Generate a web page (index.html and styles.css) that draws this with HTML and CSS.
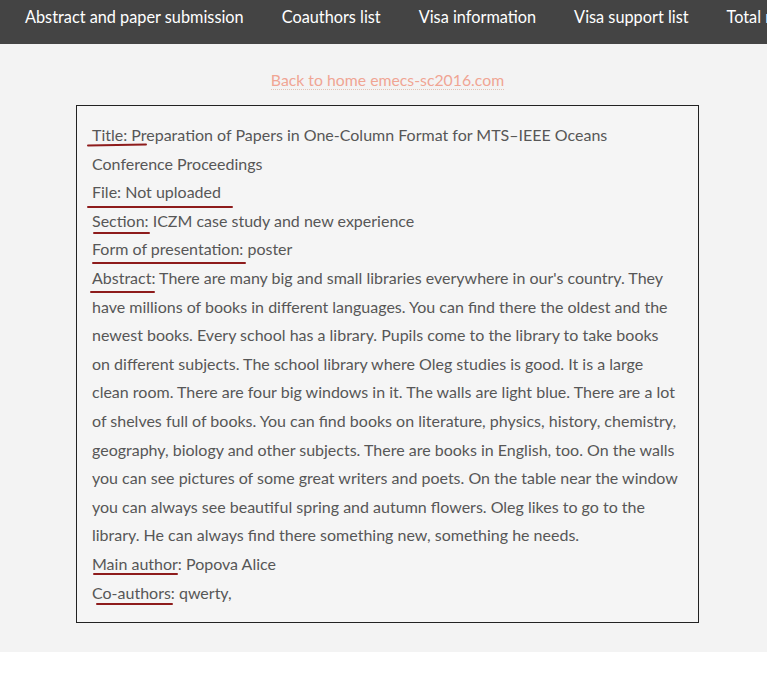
FILE: index.html
```html
<!DOCTYPE html>
<html>
<head>
<meta charset="utf-8">
<title>Abstract</title>
<link rel="stylesheet" href="styles.css">
</head>
<body>
<nav class="topnav">
  <a class="topnav-item" href="#">Abstract and paper submission</a>
  <a class="topnav-item" href="#">Coauthors list</a>
  <a class="topnav-item" href="#">Visa information</a>
  <a class="topnav-item" href="#">Visa support list</a>
  <a class="topnav-item" href="#">Total registration list</a>
</nav>
<main class="main">
  <div class="page">
    <div class="back"><a class="back-link" href="#">Back to home emecs-sc2016.com</a></div>
    <section class="card">
      <div class="field u-title">Title: Preparation of Papers in One-Column Format for MTS–IEEE Oceans Conference Proceedings</div>
      <div class="field u-file">File: Not uploaded</div>
      <div class="field u-section">Section: ICZM case study and new experience</div>
      <div class="field u-form">Form of presentation: poster</div>
      <div class="field u-abstract">Abstract: There are many big and small libraries everywhere in our's country. They have millions of books in different languages. You can find there the oldest and the newest books. Every school has a library. Pupils come to the library to take books on different subjects. The school library where Oleg studies is good. It is a large clean room. There are four big windows in it. The walls are light blue. There are a lot of shelves full of books. You can find books on literature, physics, history, chemistry, geography, biology and other subjects. There are books in English, too. On the walls you can see pictures of some great writers and poets. On the table near the window you can always see beautiful spring and autumn flowers. Oleg likes to go to the library. He can always find there something new, something he needs.</div>
      <div class="field u-main">Main author: Popova Alice</div>
      <div class="field u-co">Co-authors: qwerty,</div>
    </section>
  </div>
</main>
</body>
</html>
```
FILE: styles.css
```css
html, body {
  margin: 0;
  padding: 0;
  overflow-x: hidden;
  background: #ffffff;
}
body {
  font-family: Lato, "Noto Sans", sans-serif;
  color: #575757;
}
.topnav {
  display: flex;
  flex-wrap: nowrap;
  height: 44px;
  background: #444444;
  padding-left: 6px;
  overflow: hidden;
  white-space: nowrap;
}
.topnav-item {
  flex: none;
  display: block;
  padding: 5px 19px 0;
  line-height: 24px;
  font-size: 16.3px;
  color: #ffffff;
  text-decoration: none;
}
.main {
  background: #f3f3f3;
  padding-top: 24px;
  padding-bottom: 29px;
}
.page {
  width: 775px;
  margin: 0 auto;
}
.back {
  text-align: center;
  line-height: 24px;
  font-size: 15.8px;
  margin-bottom: 13px;
}
.back-link {
  color: #f0a593;
  font-weight: 400;
  text-decoration: none;
  border-bottom: 1px dotted #e2c2b4;
}
.card {
  box-sizing: border-box;
  width: 623px;
  margin: 0 auto;
  border: 1px solid #222222;
  background: #f5f5f5;
  padding: 15px 18px 15px 15px;
  font-size: 16px;
  line-height: 28.6px;
}
.field {
  position: relative;
}
.field::before {
  content: "";
  position: absolute;
  height: 2px;
  border-radius: 2px;
  background: #8e1c1c;
}
.u-title::before { left: -5px; width: 60px; top: 23px; transform: rotate(-1deg); }
.u-file::before { left: -5px; width: 146px; top: 28px; }
.u-section::before { left: 1px; width: 57px; top: 25px; }
.u-form::before { left: 0; width: 154px; top: 27px; }
.u-abstract::before { left: -2px; width: 65px; top: 27px; }
.u-main::before { left: 1px; width: 85px; top: 23px; }
.u-co::before { left: 4px; width: 77px; top: 24px; }
```
